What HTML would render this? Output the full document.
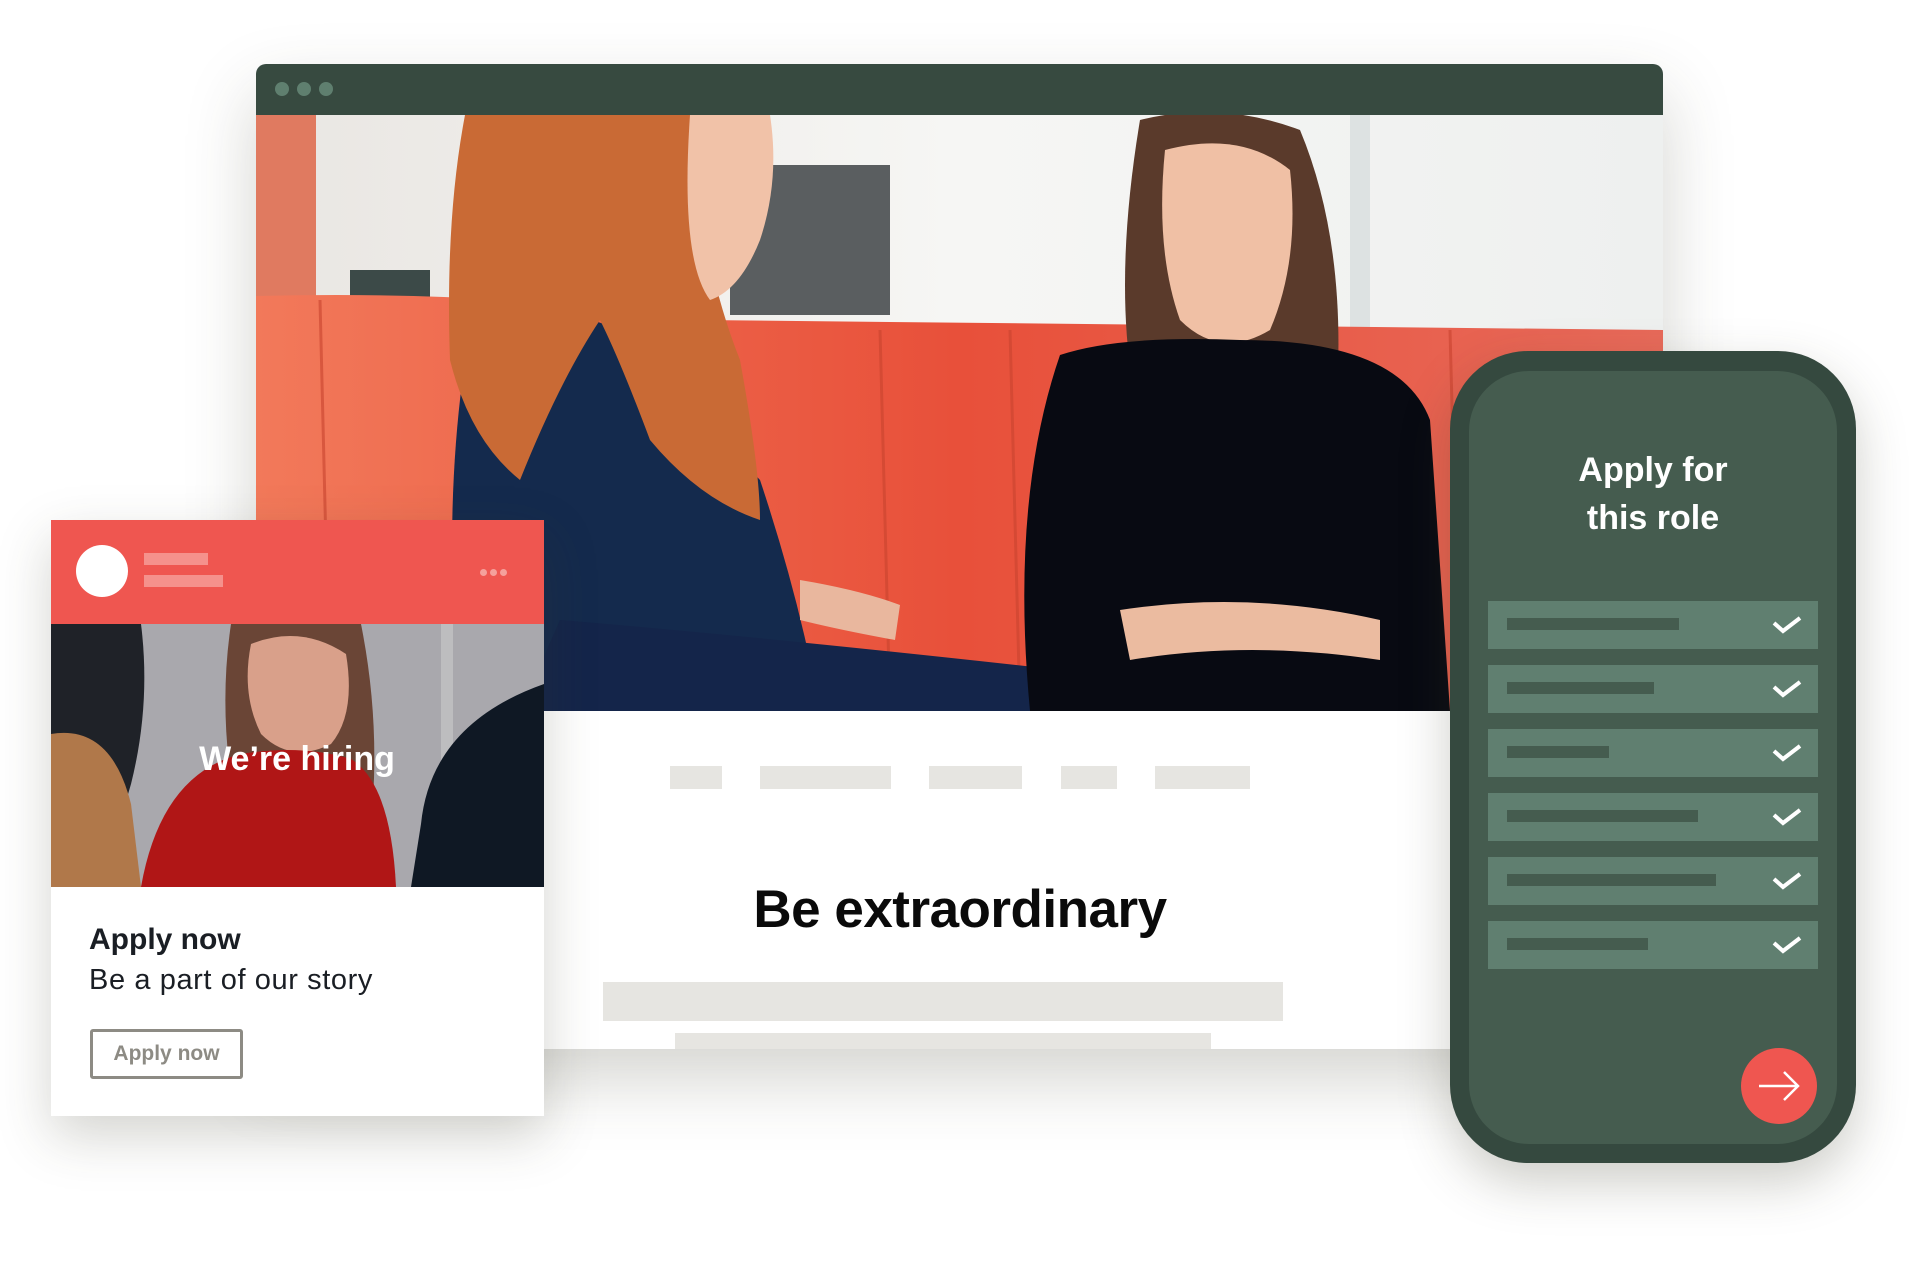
<!DOCTYPE html>
<html><head><meta charset="utf-8">
<style>
*{margin:0;padding:0;box-sizing:border-box}
html,body{width:1920px;height:1280px;overflow:hidden;background:#fff;font-family:"Liberation Sans",sans-serif}
.abs{position:absolute}
</style></head><body>
<div class="abs" style="left:256px;top:64px;width:1407px;height:985px;box-shadow:0 30px 70px rgba(60,60,40,0.22);border-radius:10px 10px 0 0;background:#fff"></div>
<div class="abs" style="left:256px;top:64px;width:1407px;height:51px;background:#374a40;border-radius:10px 10px 0 0"></div>
<div class="abs" style="left:275px;top:82px;width:14px;height:14px;border-radius:50%;background:#5f7f6f"></div>
<div class="abs" style="left:297px;top:82px;width:14px;height:14px;border-radius:50%;background:#5f7f6f"></div>
<div class="abs" style="left:319px;top:82px;width:14px;height:14px;border-radius:50%;background:#5f7f6f"></div>
<svg class="abs" style="left:256px;top:115px" width="1407" height="596" viewBox="256 115 1407 596">
<defs>
<linearGradient id="bg" x1="0" y1="0" x2="1" y2="0"><stop offset="0" stop-color="#e9e6e2"/><stop offset="0.5" stop-color="#f6f6f4"/><stop offset="1" stop-color="#eef0ef"/></linearGradient>
<linearGradient id="sofa" x1="0" y1="0" x2="1" y2="0"><stop offset="0" stop-color="#f2795a"/><stop offset="0.5" stop-color="#e8503a"/><stop offset="1" stop-color="#e86a5a"/></linearGradient>
</defs>
<rect x="256" y="115" width="1407" height="596" fill="url(#bg)"/>
<rect x="256" y="115" width="60" height="190" fill="#e07a60"/>
<rect x="350" y="270" width="80" height="60" fill="#3c4a48"/>
<rect x="430" y="300" width="70" height="30" fill="#50585a"/>
<rect x="730" y="165" width="160" height="150" fill="#5a5e60"/>
<rect x="1350" y="115" width="20" height="230" fill="#dde2e2"/>
<path d="M256 296 Q500 290 700 320 L1663 330 L1663 711 L256 711 Z" fill="url(#sofa)"/>
<g stroke="#c9442f" stroke-width="3" opacity="0.6"><line x1="320" y1="300" x2="330" y2="711"/><line x1="720" y1="330" x2="730" y2="711"/><line x1="880" y1="330" x2="890" y2="711"/><line x1="1010" y1="330" x2="1020" y2="711"/><line x1="1450" y1="330" x2="1460" y2="711"/></g>
<path d="M470 330 Q520 290 620 330 L760 480 Q800 600 820 711 L460 711 Q440 500 470 330Z" fill="#142a4d"/>
<path d="M560 620 Q800 640 1150 680 L1160 711 L520 711Z" fill="#14254a"/>
<path d="M465 115 L690 115 Q700 260 740 360 Q760 470 760 520 Q700 500 650 440 Q620 360 600 320 Q560 380 520 480 Q470 440 450 360 Q445 220 465 115Z" fill="#c96a35"/>
<path d="M690 115 L770 115 Q780 180 760 240 Q740 290 710 300 Q680 260 690 115Z" fill="#f1c2a8"/>
<path d="M800 580 Q860 590 900 605 L895 640 Q840 630 800 620Z" fill="#e9b79e"/>
<path d="M1140 120 Q1220 100 1300 130 Q1350 250 1335 420 L1140 420 Q1110 300 1140 120Z" fill="#5a3a2b"/>
<path d="M1165 150 Q1240 130 1290 170 Q1300 260 1270 330 Q1220 360 1180 320 Q1155 250 1165 150Z" fill="#f0c0a5"/>
<path d="M1060 355 Q1120 335 1240 340 Q1400 340 1430 420 L1450 711 L1030 711 Q1010 500 1060 355Z" fill="#080a12"/>
<path d="M1120 610 Q1250 590 1380 620 L1380 660 Q1250 640 1130 660Z" fill="#ebbba0"/>
</svg>
<div class="abs" style="left:670px;top:766px;width:52px;height:23px;background:#e6e5e1"></div>
<div class="abs" style="left:760px;top:766px;width:131px;height:23px;background:#e6e5e1"></div>
<div class="abs" style="left:929px;top:766px;width:93px;height:23px;background:#e6e5e1"></div>
<div class="abs" style="left:1061px;top:766px;width:56px;height:23px;background:#e6e5e1"></div>
<div class="abs" style="left:1155px;top:766px;width:95px;height:23px;background:#e6e5e1"></div>
<div class="abs" style="left:610px;top:878px;width:700px;text-align:center;font-weight:bold;font-size:53px;color:#0a0a0a;letter-spacing:-0.5px;line-height:64px">Be extraordinary</div>
<div class="abs" style="left:603px;top:982px;width:680px;height:39px;background:#e6e5e1"></div>
<div class="abs" style="left:675px;top:1033px;width:536px;height:16px;background:#e6e5e1"></div>

<div class="abs" style="left:51px;top:520px;width:493px;height:596px;background:#fff;box-shadow:0 20px 50px rgba(60,60,40,0.22)"></div>
<div class="abs" style="left:51px;top:520px;width:493px;height:104px;background:#ef5650"></div>
<div class="abs" style="left:76px;top:545px;width:52px;height:52px;border-radius:50%;background:#fff"></div>
<div class="abs" style="left:144px;top:553px;width:64px;height:12px;background:#f5918c"></div>
<div class="abs" style="left:144px;top:575px;width:79px;height:12px;background:#f5918c"></div>
<div class="abs" style="left:480px;top:569px;width:7px;height:7px;border-radius:50%;background:#f5a09b"></div>
<div class="abs" style="left:490px;top:569px;width:7px;height:7px;border-radius:50%;background:#f5a09b"></div>
<div class="abs" style="left:500px;top:569px;width:7px;height:7px;border-radius:50%;background:#f5a09b"></div>
<svg class="abs" style="left:51px;top:624px" width="493" height="263" viewBox="0 0 493 263">
<rect width="493" height="263" fill="#a9a8ad"/>
<rect x="390" y="0" width="12" height="263" fill="#bdbdbf"/>
<path d="M0 0 L90 0 Q100 80 80 160 L50 263 L0 263Z" fill="#1f2228"/>
<path d="M0 110 Q60 100 80 180 L90 263 L0 263Z" fill="#b0784a"/>
<path d="M180 0 L310 0 Q330 100 320 200 L190 210 Q165 100 180 0Z" fill="#6a4536"/>
<path d="M200 20 Q250 0 295 30 Q305 90 280 120 Q240 140 210 110 Q190 70 200 20Z" fill="#d9a08a"/>
<path d="M90 263 Q110 150 190 130 Q250 120 300 135 Q340 160 345 263Z" fill="#b01616"/>
<path d="M493 60 Q380 100 370 200 L360 263 L493 263Z" fill="#0f1824"/>
<text x="246" y="146" text-anchor="middle" font-family="Liberation Sans, sans-serif" font-weight="bold" font-size="34" fill="#fff">We’re hiring</text>
</svg>
<div class="abs" style="left:89px;top:922px;font-weight:bold;font-size:30px;color:#1a1e24;line-height:36px">Apply now</div>
<div class="abs" style="left:89px;top:962px;font-size:29px;letter-spacing:0.6px;color:#1a1e24;line-height:36px">Be a part of our story</div>
<div class="abs" style="left:90px;top:1029px;width:153px;height:50px;border:3px solid #8d8b84;border-radius:3px;color:#8d8b84;font-weight:bold;font-size:21px;text-align:center;line-height:44px">Apply now</div>

<div class="abs" style="left:1450px;top:351px;width:406px;height:812px;background:#35493f;border-radius:78px;box-shadow:0 20px 50px rgba(60,60,40,0.25)"></div>
<div class="abs" style="left:1469px;top:371px;width:368px;height:773px;background:#455c4f;border-radius:60px"></div>
<div class="abs" style="left:1469px;top:446px;width:368px;text-align:center;color:#fff;font-weight:bold;font-size:34px;line-height:48px">Apply for<br>this role</div>
<div class="abs" style="left:1488px;top:601px;width:330px">
 <div style="position:relative;height:48px;background:#607f70;margin-bottom:16px"><div style="position:absolute;left:19px;top:17px;width:172px;height:12px;background:#455c4f"></div><svg style="position:absolute;left:284px;top:12px" width="30" height="22"><path d="M2 10 L11 18 L28 5" stroke="#fff" stroke-width="4" fill="none"/></svg></div>
 <div style="position:relative;height:48px;background:#607f70;margin-bottom:16px"><div style="position:absolute;left:19px;top:17px;width:147px;height:12px;background:#455c4f"></div><svg style="position:absolute;left:284px;top:12px" width="30" height="22"><path d="M2 10 L11 18 L28 5" stroke="#fff" stroke-width="4" fill="none"/></svg></div>
 <div style="position:relative;height:48px;background:#607f70;margin-bottom:16px"><div style="position:absolute;left:19px;top:17px;width:102px;height:12px;background:#455c4f"></div><svg style="position:absolute;left:284px;top:12px" width="30" height="22"><path d="M2 10 L11 18 L28 5" stroke="#fff" stroke-width="4" fill="none"/></svg></div>
 <div style="position:relative;height:48px;background:#607f70;margin-bottom:16px"><div style="position:absolute;left:19px;top:17px;width:191px;height:12px;background:#455c4f"></div><svg style="position:absolute;left:284px;top:12px" width="30" height="22"><path d="M2 10 L11 18 L28 5" stroke="#fff" stroke-width="4" fill="none"/></svg></div>
 <div style="position:relative;height:48px;background:#607f70;margin-bottom:16px"><div style="position:absolute;left:19px;top:17px;width:209px;height:12px;background:#455c4f"></div><svg style="position:absolute;left:284px;top:12px" width="30" height="22"><path d="M2 10 L11 18 L28 5" stroke="#fff" stroke-width="4" fill="none"/></svg></div>
 <div style="position:relative;height:48px;background:#607f70"><div style="position:absolute;left:19px;top:17px;width:141px;height:12px;background:#455c4f"></div><svg style="position:absolute;left:284px;top:12px" width="30" height="22"><path d="M2 10 L11 18 L28 5" stroke="#fff" stroke-width="4" fill="none"/></svg></div>
</div>
<svg class="abs" style="left:1740px;top:1047px" width="78" height="78" viewBox="0 0 78 78">
<circle cx="39" cy="39" r="38" fill="#ef5650"/>
<path d="M19 39 H58 M44 25 L58 39 L44 53" stroke="#fff" stroke-width="2.5" fill="none"/>
</svg>
</body></html>
